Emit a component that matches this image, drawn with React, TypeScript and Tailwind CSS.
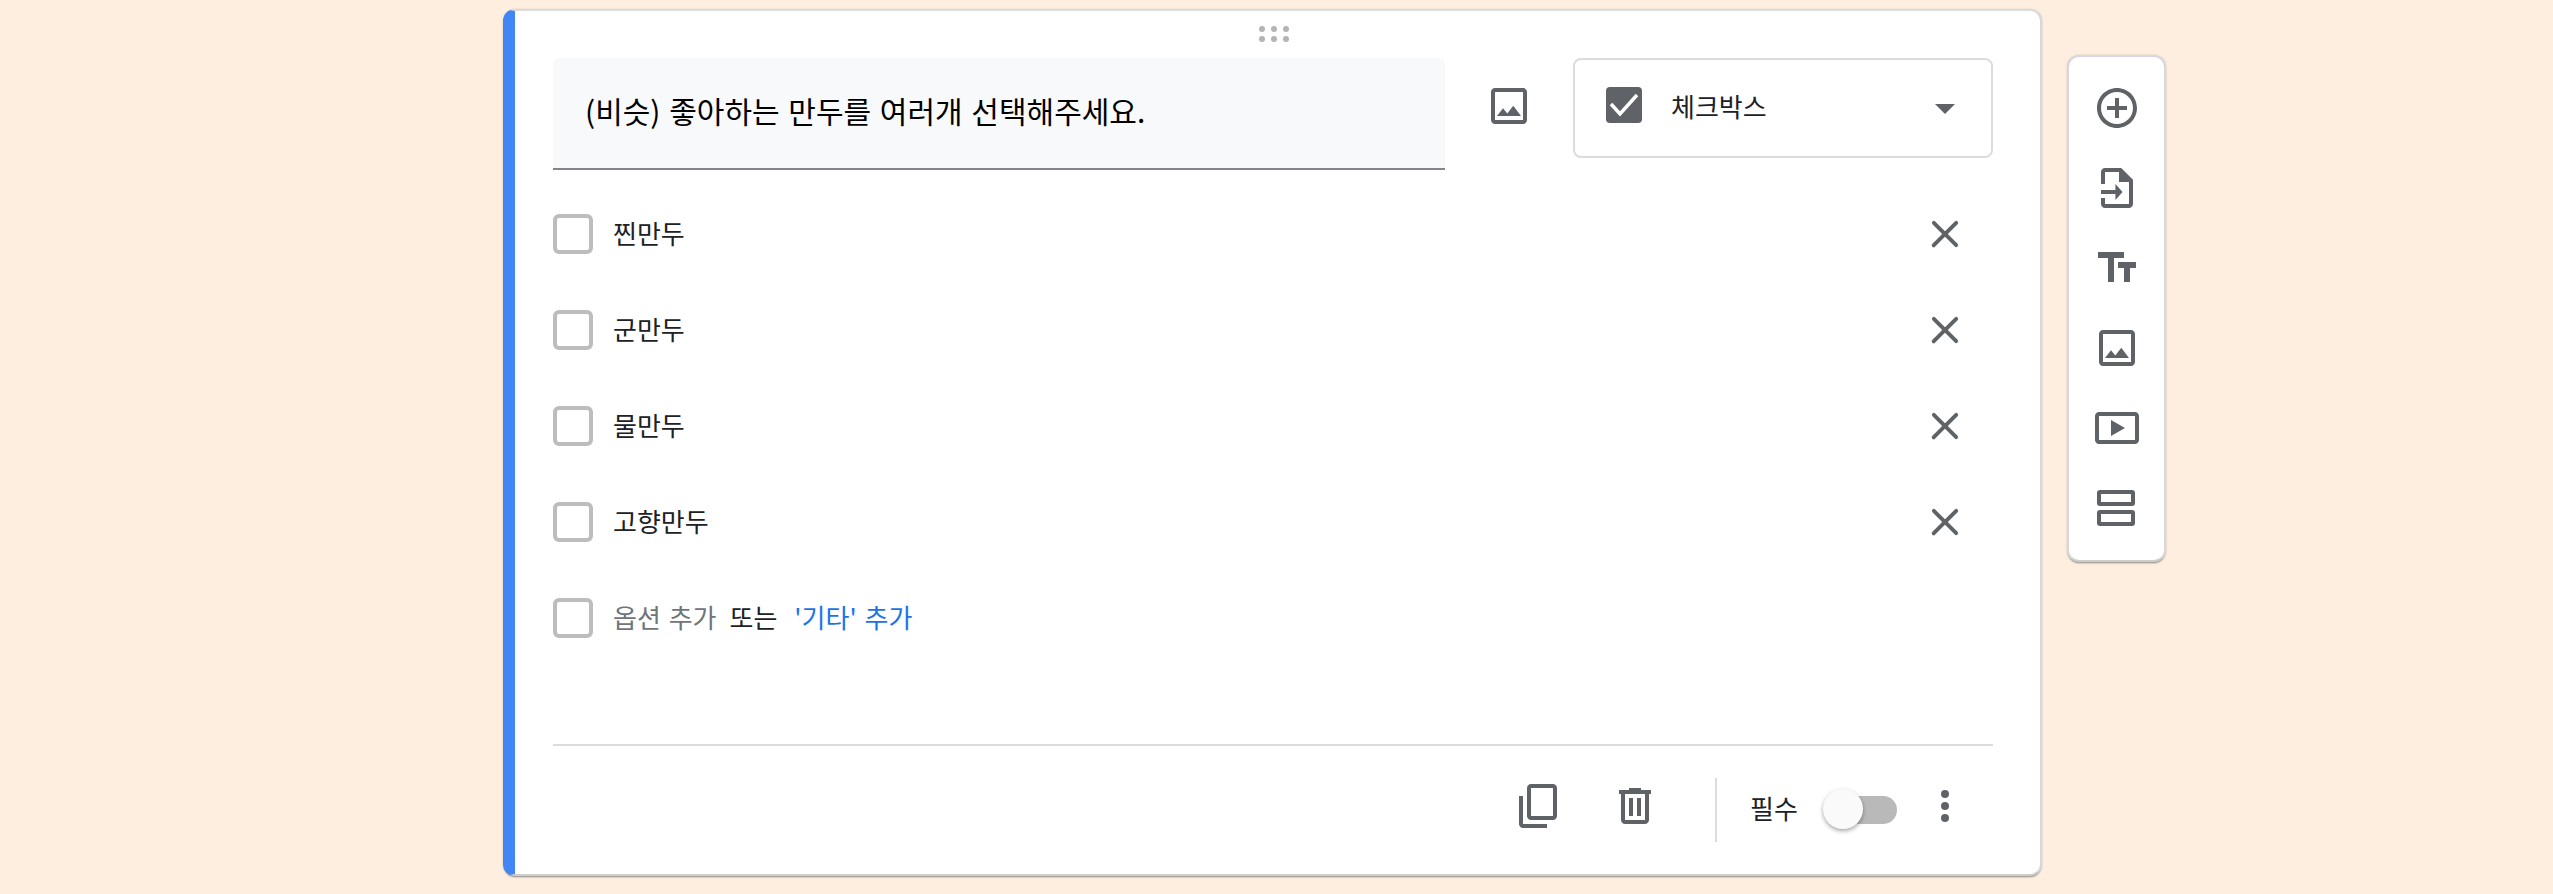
import React from "react";

const c = "#5f6368";

function Ic({ children, className = "" }: { children: React.ReactNode; className?: string }) {
  return (
    <svg width={48} height={48} viewBox="0 0 24 24" fill={c} className={"block shrink-0 " + className}>
      {children}
    </svg>
  );
}

const ImageIcon = () => (
  <Ic>
    <path d="M19 5v14H5V5h14m0-2H5c-1.1 0-2 .9-2 2v14c0 1.1.9 2 2 2h14c1.1 0 2-.9 2-2V5c0-1.1-.9-2-2-2z" />
    <path d="M14.14 11.86l-3 3.87L9 13.14 6 17h12z" />
  </Ic>
);

const Close = () => (
  <Ic>
    <path d="M18.3 5.71a1 1 0 0 0-1.41 0L12 10.59 7.11 5.7A1 1 0 0 0 5.7 7.11L10.59 12 5.7 16.89a1 1 0 1 0 1.41 1.41L12 13.41l4.89 4.89a1 1 0 0 0 1.41-1.41L13.41 12l4.89-4.89a1 1 0 0 0 0-1.4z" />
  </Ic>
);

function Option({ label }: { label: string }) {
  return (
    <div className="flex h-[96px] items-center">
      <div className="h-[40px] w-[40px] shrink-0 rounded-[6px] border-[4px] border-[#bdbdbd]" />
      <span className="mb-[3px] ml-[20px] text-[26px] leading-[36px] text-[#202124]">{label}</span>
      <div className="ml-auto mr-[24px]">
        <Close />
      </div>
    </div>
  );
}

export default function App() {
  return (
    <div
      className="flex min-h-[894px] w-full items-start gap-[25px] overflow-hidden bg-[#feeedf] pl-[503px] pt-[9px] [word-spacing:2px]"
      style={{ fontFamily: '"Noto Sans CJK KR", "Noto Sans", sans-serif' }}
    >
      <div className="relative h-[867px] w-[1539px] shrink-0 rounded-[12px] border-y-2 border-l-[12px] border-r-2 border-t-[#dadce0] border-r-[#d6d8dc] border-b-[#cdced1] border-l-[#4285f4] bg-white pl-[38px] pr-[47px] pt-[47px] shadow-[0_2px_2px_-1px_rgba(0,0,0,0.4),0_0_2px_rgba(60,64,67,0.2)]">
        <svg width="30" height="16" viewBox="0 0 30 16" fill="#b4b4b4" className="absolute left-[744px] top-[15px]">
          <circle cx="3" cy="3" r="3" />
          <circle cx="15" cy="3" r="3" />
          <circle cx="27" cy="3" r="3" />
          <circle cx="3" cy="13" r="3" />
          <circle cx="15" cy="13" r="3" />
          <circle cx="27" cy="13" r="3" />
        </svg>

        <div className="flex items-start">
          <div className="flex h-[112px] w-[892px] items-center rounded-t-[6px] border-b-2 border-[#80868b] bg-[#f8f9fa] pb-[5px] pl-[32px] text-[30px] text-[#000000]">
            (비슷) 좋아하는 만두를 여러개 선택해주세요.
          </div>
          <div className="ml-[40px] mt-[24px]">
            <ImageIcon />
          </div>
          <div className="ml-[40px] flex h-[100px] w-[420px] items-start rounded-[8px] border-2 border-[#dadce0] pl-[31px] pt-[27px]">
            <svg width="36" height="36" viewBox="0 0 36 36" className="shrink-0">
              <rect width="36" height="36" rx="4" fill={c} />
              <path d="M5 17l9 10L31 8" fill="none" stroke="#fff" strokeWidth="3.5" />
            </svg>
            <span className="ml-[29px] mt-[1px] text-[26px] leading-[36px] text-[#202124]">체크박스</span>
            <svg width="20" height="10" viewBox="0 0 20 10" fill={c} className="ml-auto mr-[36px] mt-[17px]">
              <path d="M0 0h20L10 10z" />
            </svg>
          </div>
        </div>

        <div className="mt-[16px]">
          <Option label="찐만두" />
          <Option label="군만두" />
          <Option label="물만두" />
          <Option label="고향만두" />
          <div className="flex h-[96px] items-center text-[26px] leading-[36px]">
            <div className="h-[40px] w-[40px] shrink-0 rounded-[6px] border-[4px] border-[#bdbdbd]" />
            <span className="mb-[3px] ml-[20px] text-[#70757a]">옵션 추가</span>
            <span className="mb-[3px] ml-[13px] text-[#202124]">또는</span>
            <span className="mb-[3px] ml-[17px] text-[#1a73e8]">'기타' 추가</span>
          </div>
        </div>

        <div className="mt-[78px] h-[2px] bg-[#dadce0]" />

        <div className="mt-[32px] flex h-[64px] items-center">
          <div className="mb-[8px] ml-[962px]">
            <Ic>
              <path d="M16 1H4C2.9 1 2 1.9 2 3v14h2V3h12V1zm3 4H8C6.9 5 6 5.9 6 7v14c0 1.1.9 2 2 2h11c1.1 0 2-.9 2-2V7c0-1.1-.9-2-2-2zm0 16H8V7h11v14z" transform="matrix(1 0 0 -1 0 24)" />
            </Ic>
          </div>
          <div className="mb-[8px] ml-[48px]">
            <Ic>
              <path d="M15 4V3H9v1H4v2h1v13c0 1.1.9 2 2 2h10c1.1 0 2-.9 2-2V6h1V4h-5zm2 15H7V6h10v13z" />
              <path d="M9 8h2v9H9zm4 0h2v9h-2z" />
            </Ic>
          </div>
          <div className="ml-[56px] h-[64px] w-[2px] bg-[#dadce0]" />
          <span className="mb-[5px] ml-[33px] text-[26px] leading-[36px] text-[#202124]">필수</span>
          <div className="relative ml-[25px] h-[28px] w-[74px]">
            <div className="ml-[20px] h-[28px] w-[54px] rounded-full bg-[#b9b9b9]" />
            <div className="absolute left-0 top-[-7px] h-[40px] w-[40px] rounded-full bg-[#fafafa] shadow-[0_2px_4px_rgba(0,0,0,0.35)]" />
          </div>
          <div className="mb-[8px] ml-[44px] flex flex-col gap-[4px]">
            <div className="h-[8px] w-[8px] rounded-full bg-[#5f6368]" />
            <div className="h-[8px] w-[8px] rounded-full bg-[#5f6368]" />
            <div className="h-[8px] w-[8px] rounded-full bg-[#5f6368]" />
          </div>
        </div>
      </div>

      <div className="mt-[46px] flex h-[507px] w-[99px] shrink-0 flex-col items-center gap-[32px] rounded-[12px] border-2 border-[#d6d8dc] border-b-[#cdced1] bg-white pt-[27px] shadow-[0_2px_2px_-1px_rgba(0,0,0,0.4),0_0_2px_rgba(60,64,67,0.2)]">
        <Ic>
          <path d="M13 7h-2v4H7v2h4v4h2v-4h4v-2h-4V7zm-1-5C6.49 2 2 6.49 2 12s4.49 10 10 10 10-4.49 10-10S17.51 2 12 2zm0 18c-4.41 0-8-3.59-8-8s3.59-8 8-8 8 3.59 8 8-3.59 8-8 8z" />
        </Ic>
        <Ic>
          <path d="M14 2H6c-1.1 0-2 .9-2 2v6h2V4h7v5h5v11H6v-3H4v3c0 1.1.9 2 2 2h12c1.1 0 2-.9 2-2V8l-6-6z" />
          <path d="M13 2h1l6 6v1h-7z" />
          <path d="M4 13v2h7.2v3l3.6-4-3.6-4v3z" />
        </Ic>
        <Ic>
          <path d="M2.5 4v3h5v12h3V7h5V4h-13zm19 5h-9v3h3v7h3v-7h3V9z" />
        </Ic>
        <ImageIcon />
        <Ic>
          <path d="M21 4H3c-1.1 0-2 .9-2 2v12c0 1.1.9 2 2 2h18c1.1 0 2-.9 2-2V6c0-1.1-.9-2-2-2zm0 14H3V6h18v12z" />
          <path d="M9 8v8l7-4z" />
        </Ic>
        <Ic>
          <rect x="3" y="4" width="17" height="6" rx="0.5" fill="none" stroke={c} strokeWidth="2" />
          <rect x="3" y="14" width="17" height="6" rx="0.5" fill="none" stroke={c} strokeWidth="2" />
        </Ic>
      </div>
    </div>
  );
}
